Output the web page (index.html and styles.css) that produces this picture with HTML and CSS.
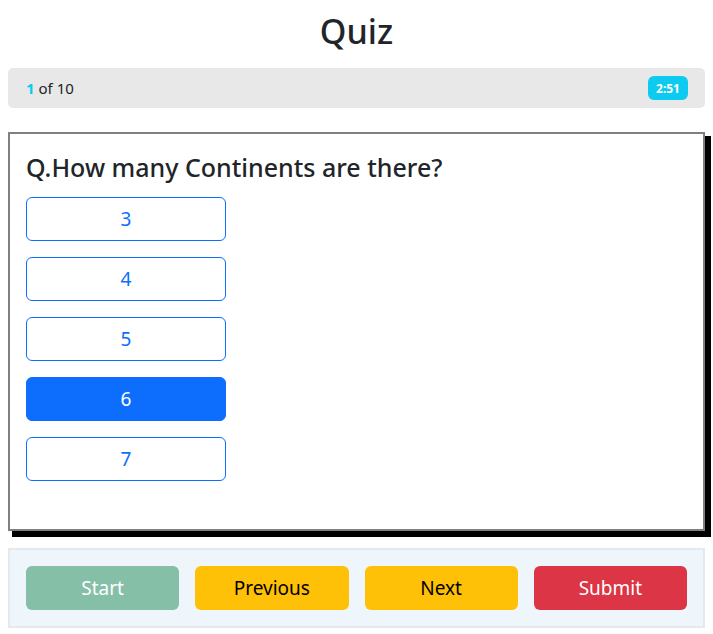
FILE: index.html
```html
<!DOCTYPE html>
<html lang="en">
<head>
<meta charset="utf-8">
<title>Quiz</title>
<link rel="stylesheet" href="styles.css">
</head>
<body>
<div class="page">
  <h1 class="title">Quiz</h1>
  <div class="progress">
    <span class="count"><b class="current">1</b> of 10</span>
    <span class="timer">2:51</span>
  </div>
  <div class="card">
    <h3 class="question">Q.How many Continents are there?</h3>
    <div class="options">
      <button class="option">3</button>
      <button class="option">4</button>
      <button class="option">5</button>
      <button class="option selected">6</button>
      <button class="option">7</button>
    </div>
  </div>
  <div class="footer">
    <button class="btn btn-start">Start</button>
    <button class="btn btn-warn">Previous</button>
    <button class="btn btn-warn">Next</button>
    <button class="btn btn-danger">Submit</button>
  </div>
</div>
</body>
</html>
```
FILE: styles.css
```css
* { box-sizing: border-box; }
html, body { margin: 0; padding: 0; background: #fff; }
body {
  font-family: "Noto Sans", "Open Sans", sans-serif;
  color: #212529;
}
.page { padding: 12px 8px 8px 8px; width: 713px; }
.title {
  margin: 0 0 17px 0;
  text-align: center;
  font-size: 34px;
  font-weight: 500;
  line-height: 39px;
}
.progress {
  height: 40px;
  background: #e8e8e8;
  border-radius: 5px;
  display: flex;
  align-items: center;
  justify-content: space-between;
  padding: 0 17px 0 18px;
  font-size: 15px;
}
.current { color: #0dcaf0; font-weight: 700; }
.timer {
  background: #0dcaf0;
  color: #fff;
  font-weight: 700;
  font-size: 12px;
  height: 24px;
  width: 40px;
  border-radius: 6px;
  display: flex;
  align-items: center;
  justify-content: center;
}
.card {
  margin-top: 24px;
  border: 2px solid #808080;
  box-shadow: 5px 5px 0 1px #000;
  padding: 18px 16px 48px 16px;
}
.question {
  margin: 0 0 15px 0;
  font-size: 25px;
  font-weight: 500;
  line-height: 30px;
}
.options { display: flex; flex-direction: column; gap: 16px; }
.option {
  width: 200px;
  height: 44px;
  border: 1px solid #0d6efd;
  border-radius: 6px;
  background: #fff;
  color: #0d6efd;
  font-family: inherit;
  font-size: 19px;
  padding: 0;
}
.option.selected { background: #0d6efd; color: #fff; }
.footer {
  margin-top: 17px;
  border: 2px solid #e6e9ec;
  background: #eef6fc;
  padding: 16px;
  display: grid;
  grid-template-columns: repeat(4, 1fr);
  gap: 16px;
}
.btn {
  height: 44px;
  border: none;
  border-radius: 6px;
  font-family: inherit;
  font-size: 19px;
  padding: 0;
}
.btn-start { background: #85bfa8; color: #fff; }
.btn-warn { background: #ffc107; color: #000; }
.btn-danger { background: #dc3545; color: #fff; }
```
